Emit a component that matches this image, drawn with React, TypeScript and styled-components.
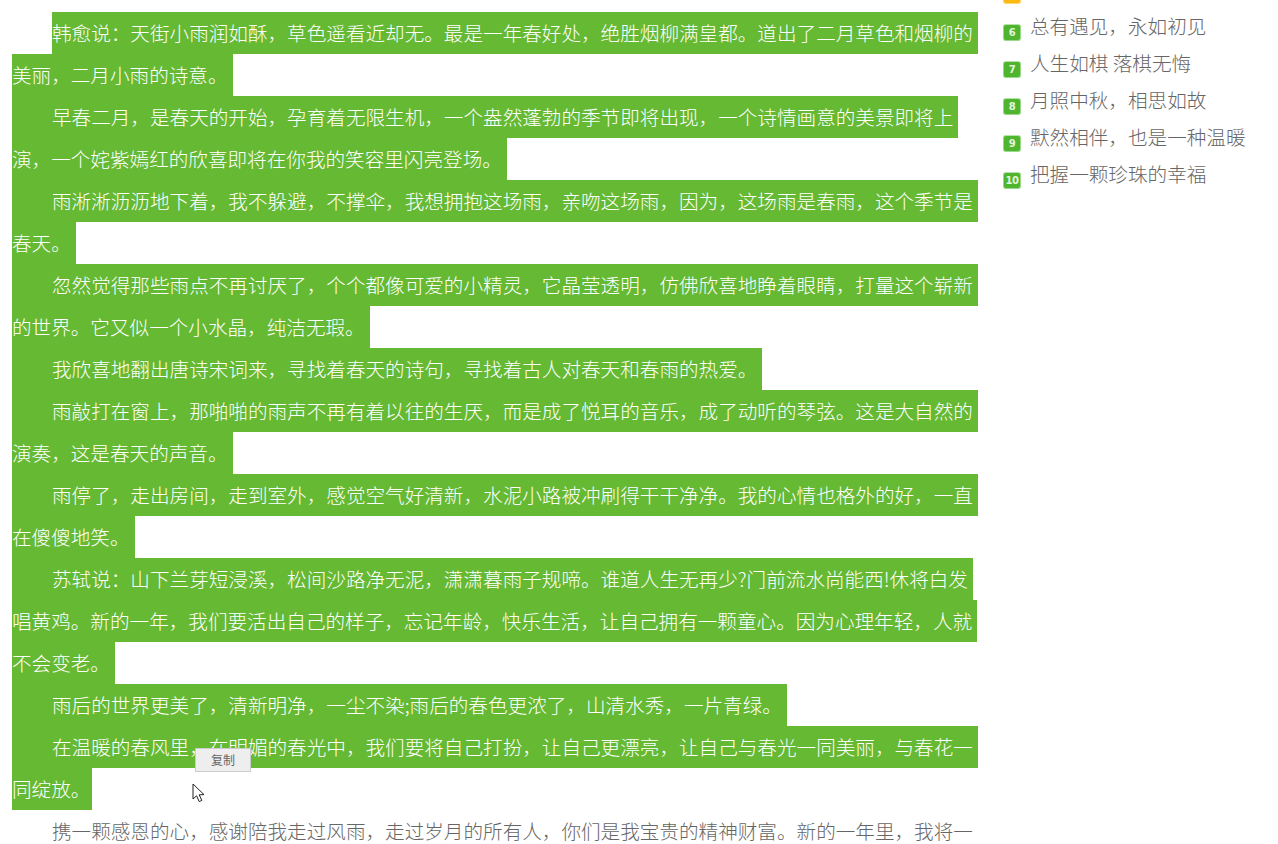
import React from "react";
import styled, { createGlobalStyle } from "styled-components";

const GlobalStyle = createGlobalStyle`
  html, body {
    margin: 0;
    padding: 0;
    background: #fff;
    overflow: hidden;
  }
`;

const Page = styled.div`
  display: flex;
  align-items: flex-start;
  height: 844px;
  overflow: hidden;
  padding-left: 12px;
  font-family: "Noto Sans CJK SC", "Liberation Sans", sans-serif;
  font-size: 19.6px;
  font-weight: 300;
  color: #666;
`;

const Article = styled.article`
  position: relative;
  flex: 0 0 970px;
  margin-top: -30px;
`;

const Paragraph = styled.p`
  margin: 0;
`;

const Line = styled.span<{ $indent?: boolean; $start?: boolean; $selected?: boolean; $tight?: boolean }>`
  display: block;
  width: fit-content;
  height: 42px;
  line-height: 42px;
  white-space: nowrap;
  padding-right: ${(p) => (p.$tight ? "2px" : "5px")};
  padding-left: ${(p) => (p.$indent ? "40px" : "0")};
  margin-left: ${(p) => (p.$start ? "40px" : "0")};
  background: ${(p) => (p.$selected ? "#66b933" : "transparent")};
  color: ${(p) => (p.$selected ? "#fff" : "#666")};
`;

const LeadLine = styled(Line)`
  line-height: 39px;
`;

const CopyButton = styled.button`
  position: absolute;
  left: 183px;
  top: 778px;
  width: 56px;
  height: 24px;
  padding: 0;
  border: 1px solid #ccc;
  background: #eee;
  color: #666;
  font-family: inherit;
  font-size: 12px;
  line-height: 22px;
`;

const Cursor = styled.svg`
  position: absolute;
  left: 180px;
  top: 813px;
  width: 14px;
  height: 20px;
`;

const Sidebar = styled.ol`
  list-style: none;
  margin: -30px 0 0 21px;
  padding: 0;
`;

const RankItem = styled.li`
  display: flex;
  align-items: center;
  gap: 9px;
  height: 37px;
  white-space: nowrap;
`;

const Badge = styled.span<{ $hot?: boolean }>`
  flex: none;
  box-sizing: border-box;
  width: 18px;
  height: 17px;
  margin-top: 13px;
  border-radius: 3px;
  border: 1px solid ${(p) => (p.$hot ? "#ffd76a" : "#9ad88a")};
  border-top-color: ${(p) => (p.$hot ? "#ffe49a" : "#b5e3a8")};
  background: ${(p) => (p.$hot ? "#fdb913" : "#4fb52e")};
  color: #e4f4dc;
  font-family: "DejaVu Sans", sans-serif;
  font-size: 10px;
  font-weight: bold;
  line-height: 15px;
  letter-spacing: -0.5px;
  text-align: center;
`;

const paragraphs = [
  [
    "韩愈说：天街小雨润如酥，草色遥看近却无。最是一年春好处，绝胜烟柳满皇都。道出了二月草色和烟柳的",
    "美丽，二月小雨的诗意。",
  ],
  [
    "早春二月，是春天的开始，孕育着无限生机，一个盎然蓬勃的季节即将出现，一个诗情画意的美景即将上",
    "演，一个姹紫嫣红的欣喜即将在你我的笑容里闪亮登场。",
  ],
  [
    "雨淅淅沥沥地下着，我不躲避，不撑伞，我想拥抱这场雨，亲吻这场雨，因为，这场雨是春雨，这个季节是",
    "春天。",
  ],
  [
    "忽然觉得那些雨点不再讨厌了，个个都像可爱的小精灵，它晶莹透明，仿佛欣喜地睁着眼睛，打量这个崭新",
    "的世界。它又似一个小水晶，纯洁无瑕。",
  ],
  ["我欣喜地翻出唐诗宋词来，寻找着春天的诗句，寻找着古人对春天和春雨的热爱。"],
  [
    "雨敲打在窗上，那啪啪的雨声不再有着以往的生厌，而是成了悦耳的音乐，成了动听的琴弦。这是大自然的",
    "演奏，这是春天的声音。",
  ],
  [
    "雨停了，走出房间，走到室外，感觉空气好清新，水泥小路被冲刷得干干净净。我的心情也格外的好，一直",
    "在傻傻地笑。",
  ],
  [
    "苏轼说：山下兰芽短浸溪，松间沙路净无泥，潇潇暮雨子规啼。谁道人生无再少?门前流水尚能西!休将白发",
    "唱黄鸡。新的一年，我们要活出自己的样子，忘记年龄，快乐生活，让自己拥有一颗童心。因为心理年轻，人就",
    "不会变老。",
  ],
  ["雨后的世界更美了，清新明净，一尘不染;雨后的春色更浓了，山清水秀，一片青绿。"],
  [
    "在温暖的春风里，在明媚的春光中，我们要将自己打扮，让自己更漂亮，让自己与春光一同美丽，与春花一",
    "同绽放。",
  ],
];

const ranks = [
  { n: 5, text: "" },
  { n: 6, text: "总有遇见，永如初见" },
  { n: 7, text: "人生如棋 落棋无悔" },
  { n: 8, text: "月照中秋，相思如故" },
  { n: 9, text: "默然相伴，也是一种温暖" },
  { n: 10, text: "把握一颗珍珠的幸福" },
];

const App = () => {
  return (
    <Page>
      <GlobalStyle />
      <Article>
        <Paragraph>
          <LeadLine $indent>　　　　　　　　　　二月春雨　　　　如酥如梦</LeadLine>
        </Paragraph>
        {paragraphs.map((lines, i) => (
          <Paragraph key={i}>
            {lines.map((line, j) => (
              <Line
                key={j}
                $selected
                $start={i === 0 && j === 0}
                $indent={i > 0 && j === 0}
                $tight={line === "同绽放。"}
              >
                {line}
              </Line>
            ))}
          </Paragraph>
        ))}
        <Paragraph>
          <Line $indent>
            携一颗感恩的心，感谢陪我走过风雨，走过岁月的所有人，你们是我宝贵的精神财富。新的一年里，我将一
          </Line>
        </Paragraph>
        <CopyButton>复制</CopyButton>
        <Cursor viewBox="0 0 14 20">
          <path
            d="M1 1 L1 16 L4.6 12.8 L7.2 18.6 L9.8 17.4 L7.2 11.8 L12 11.6 Z"
            fill="#fff"
            stroke="#222"
            strokeWidth="1"
            strokeLinejoin="round"
          />
        </Cursor>
      </Article>
      <Sidebar>
        {ranks.map((r) => (
          <RankItem key={r.n}>
            <Badge $hot={r.n === 5}>{r.n === 5 ? "" : r.n}</Badge>
            {r.text}
          </RankItem>
        ))}
      </Sidebar>
    </Page>
  );
};

export default App;
